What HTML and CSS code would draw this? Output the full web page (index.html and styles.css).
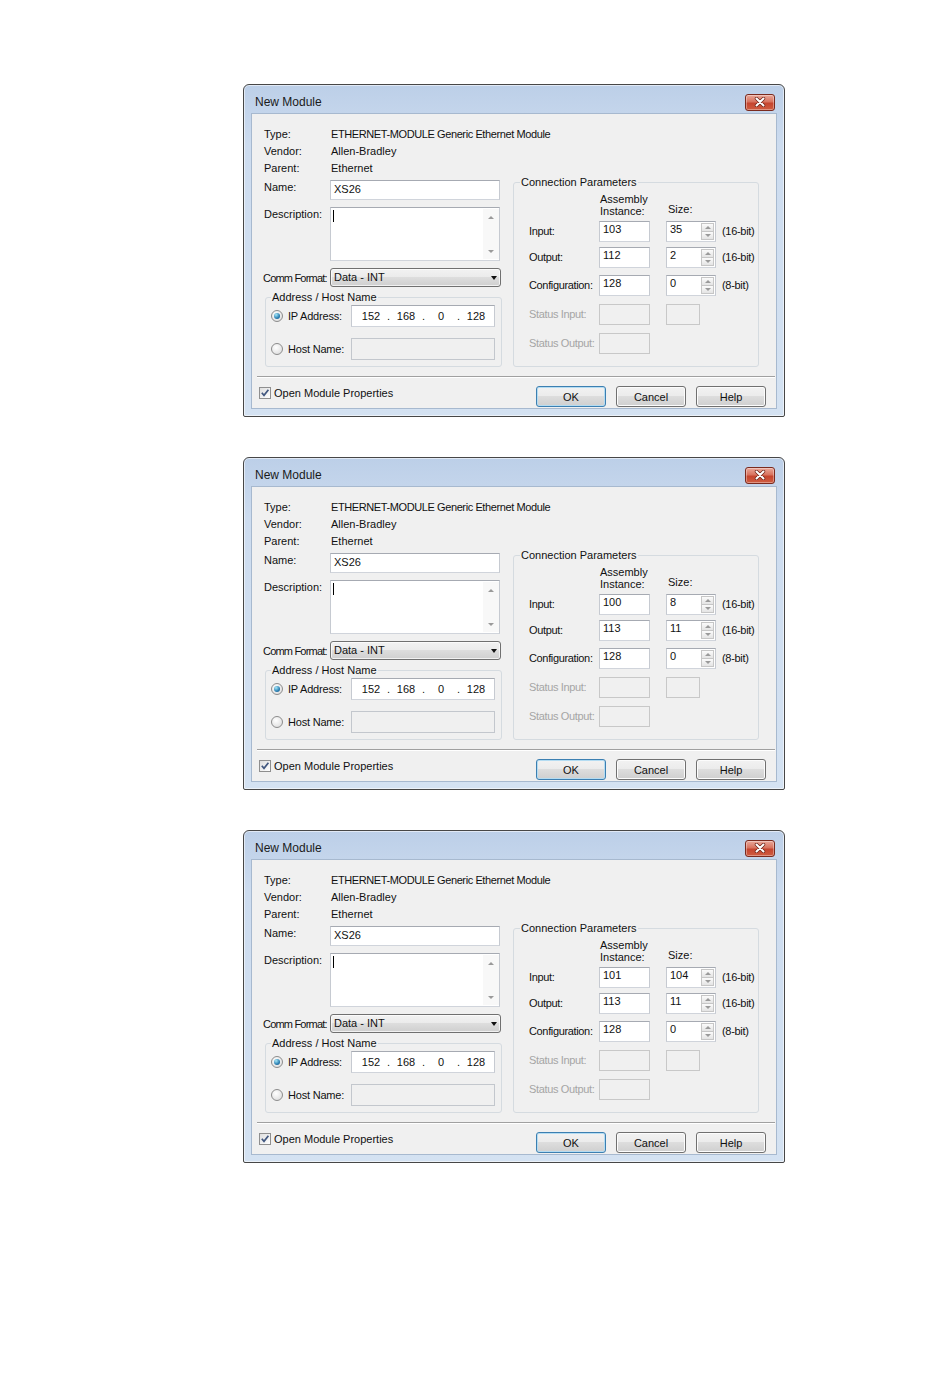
FILE: index.html
```html
<!DOCTYPE html>
<html lang="en">
<head>
    <meta charset="UTF-8">
    <meta name="viewport" content="width=device-width, initial-scale=1.0">
    <title>New Module</title>
    <link rel="stylesheet" href="styles.css">
</head>
<body>
    <div class="page" id="page"></div>

    <script>
// Connection parameters shown in each dialog
const modules = [
    { input: 103, inputSize: 35, output: 112, outputSize: 2, config: 128, configSize: 0 },
    { input: 100, inputSize: 8, output: 113, outputSize: 11, config: 128, configSize: 0 },
    { input: 101, inputSize: 104, output: 113, outputSize: 11, config: 128, configSize: 0 }
];

// Size box with the up/down spinner
function spinBox(value) {
    return `
        <div class="textbox spin">
            <span class="val">${value}</span>
            <span class="spin-btns"><span class="up"></span><span class="down"></span></span>
        </div>`;
}

function renderDialog(m) {
    return `
    <div class="dialog">
        <div class="title-bar">
            <span class="title">New Module</span>
            <span class="close-btn">
                <svg width="12" height="10" viewBox="0 0 12 10">
                    <path d="M2.5 1.5 L9.5 8.5 M9.5 1.5 L2.5 8.5" stroke="#6b2318" stroke-width="3.4" stroke-linecap="round"/>
                    <path d="M2.5 1.5 L9.5 8.5 M9.5 1.5 L2.5 8.5" stroke="#fff" stroke-width="2" stroke-linecap="round"/>
                </svg>
            </span>
        </div>
        <div class="client">
            <div class="info">
                <div>Type:</div><div class="type-value">ETHERNET-MODULE Generic Ethernet Module</div>
                <div>Vendor:</div><div>Allen-Bradley</div>
                <div>Parent:</div><div>Ethernet</div>
            </div>

            <div class="body">
                <div class="left-col">
                    <div class="form-row">
                        <label>Name:</label>
                        <div class="textbox name-box">XS26</div>
                    </div>
                    <div class="form-row">
                        <label>Description:</label>
                        <div class="textbox memo">
                            <span class="caret"></span>
                            <span class="vscroll"><span class="up"></span><span class="down"></span></span>
                        </div>
                    </div>
                    <div class="form-row combo-row">
                        <label>Comm Format:</label>
                        <div class="combo">Data - INT<span class="combo-arrow"></span></div>
                    </div>
                    <fieldset class="group address">
                        <legend>Address / Host Name</legend>
                        <div class="radio-row">
                            <span class="radio on"></span>
                            <span class="radio-label">IP Address:</span>
                            <div class="textbox ip-box">
                                <span>152</span><i>.</i><span>168</span><i>.</i><span>0</span><i>.</i><span>128</span>
                            </div>
                        </div>
                        <div class="radio-row">
                            <span class="radio"></span>
                            <span class="radio-label">Host Name:</span>
                            <div class="textbox ip-box disabled"></div>
                        </div>
                    </fieldset>
                </div>

                <fieldset class="group conn">
                    <legend>Connection Parameters</legend>
                    <div class="conn-grid">
                        <div></div>
                        <div class="col-head">Assembly<br>Instance:</div>
                        <div class="col-head size-head">Size:</div>
                        <div></div>

                        <div class="conn-label">Input:</div>
                        <div class="textbox num">${m.input}</div>
                        ${spinBox(m.inputSize)}
                        <div class="unit">(16-bit)</div>

                        <div class="conn-label">Output:</div>
                        <div class="textbox num">${m.output}</div>
                        ${spinBox(m.outputSize)}
                        <div class="unit">(16-bit)</div>

                        <div class="conn-label">Configuration:</div>
                        <div class="textbox num">${m.config}</div>
                        ${spinBox(m.configSize)}
                        <div class="unit">(8-bit)</div>

                        <div class="conn-label off">Status Input:</div>
                        <div class="off-box"></div>
                        <div class="off-box short"></div>
                        <div></div>

                        <div class="conn-label off">Status Output:</div>
                        <div class="off-box"></div>
                        <div></div>
                        <div></div>
                    </div>
                </fieldset>
            </div>

            <div class="separator"></div>

            <div class="footer">
                <div class="check-row">
                    <span class="checkbox">
                        <svg width="10" height="10" viewBox="0 0 10 10">
                            <path d="M1.8 4.8 L4 7.4 L8.4 1.8" fill="none" stroke="#41577f" stroke-width="1.7"/>
                        </svg>
                    </span>
                    Open Module Properties
                </div>
                <div class="buttons">
                    <button class="btn default">OK</button>
                    <button class="btn">Cancel</button>
                    <button class="btn">Help</button>
                </div>
            </div>
        </div>
    </div>`;
}

// Initial render
document.getElementById('page').innerHTML = modules.map(renderDialog).join('');
    </script>
</body>
</html>
```

FILE: styles.css
```css
body {
    margin: 0;
    background: #fff;
    font-family: "Liberation Sans", Arial, sans-serif;
    font-size: 11px;
    color: #111;
}

* {
    box-sizing: border-box;
}

.page {
    display: flex;
    flex-direction: column;
    gap: 40px;
    padding: 84px 0 0 243px;
}

/* Window frame */
.dialog {
    width: 542px;
    height: 333px;
    border: 1px solid #474747;
    border-radius: 6px 6px 2px 2px;
    background: linear-gradient(#bccfe8, #cddcef 60px, #d4e2f2);
    box-shadow: inset 0 0 0 1px rgba(255, 255, 255, 0.55);
    display: flex;
    flex-direction: column;
}

.title-bar {
    height: 28px;
    flex-shrink: 0;
    padding: 6px 9px 0 11px;
    display: flex;
    align-items: center;
    justify-content: space-between;
}

.title {
    font-size: 12px;
    line-height: 14px;
    color: #1a1a1a;
}

.close-btn {
    width: 30px;
    height: 17px;
    border: 1px solid #7a2a1e;
    border-radius: 3px;
    background: linear-gradient(#eaa89a, #d8735f 45%, #c5452f 55%, #d05d41);
    box-shadow: inset 0 0 0 1px rgba(255, 255, 255, 0.35);
    display: flex;
    align-items: center;
    justify-content: center;
}

.client {
    margin: 0 7px;
    height: 296px;
    flex-shrink: 0;
    overflow: hidden;
    background: #f0f0f0;
    border: 1px solid #a7b9cf;
}

/* Type / Vendor / Parent */
.info {
    display: grid;
    grid-template-columns: 67px auto;
    padding: 12px 0 0 12px;
    line-height: 17px;
}

.type-value {
    letter-spacing: -0.4px;
}

.body {
    display: flex;
    padding-left: 11px;
}

.left-col {
    width: 239px;
    padding-top: 3px;
}

.form-row {
    display: grid;
    grid-template-columns: 67px 170px;
    align-items: start;
    margin-bottom: 7px;
}

.form-row label {
    line-height: 14px;
    padding-left: 1px;
    white-space: nowrap;
}

.combo-row {
    grid-template-columns: 67px 171px;
    align-items: center;
    margin-bottom: 3px;
}

.combo-row label {
    padding-left: 0;
    letter-spacing: -0.8px;
}

/* Inputs */
.textbox {
    background: #fff;
    border: 1px solid;
    border-color: #a6aab2 #c6cad1 #d0d4db #c6cad1;
}

.name-box {
    height: 20px;
    line-height: 16px;
    padding: 0 3px;
}

.memo {
    height: 54px;
    display: flex;
    justify-content: space-between;
    padding: 1px 0 1px 2px;
}

.caret {
    width: 1px;
    height: 12px;
    margin-top: 1px;
    background: #000;
}

.vscroll {
    width: 16px;
    display: flex;
    flex-direction: column;
    justify-content: space-between;
    background: #f8f8f8;
}

.vscroll span {
    height: 16px;
    display: flex;
    align-items: center;
    justify-content: center;
}

.vscroll .up::after,
.spin-btns .up::after {
    content: "";
    border-left: 3px solid transparent;
    border-right: 3px solid transparent;
    border-bottom: 3px solid #9a9a9a;
}

.vscroll .down::after,
.spin-btns .down::after {
    content: "";
    border-left: 3px solid transparent;
    border-right: 3px solid transparent;
    border-top: 3px solid #9a9a9a;
}

.combo {
    height: 19px;
    border: 1px solid #707070;
    border-radius: 3px;
    background: linear-gradient(#f2f2f2, #ebebeb 50%, #dddddd 50%, #cfcfcf);
    box-shadow: inset 0 0 0 1px rgba(255, 255, 255, 0.7);
    padding: 0 3px;
    line-height: 17px;
    display: flex;
    justify-content: space-between;
    align-items: center;
}

.combo-arrow {
    border-left: 3.5px solid transparent;
    border-right: 3.5px solid transparent;
    border-top: 4px solid #111;
}

/* Group boxes */
.group {
    margin: 0;
    border: 1px solid #d5dbe0;
    border-radius: 3px;
    min-width: 0;
}

.group legend {
    padding: 0 1px;
    line-height: 14px;
}

.address {
    margin-left: 2px;
    width: 237px;
    padding: 1px 0 6px 5px;
}

.radio-row {
    display: flex;
    align-items: center;
    height: 22px;
}

.radio-row + .radio-row {
    margin-top: 11px;
}

.radio {
    width: 12px;
    height: 12px;
    margin-right: 5px;
    border-radius: 50%;
    border: 1px solid #8c8c8c;
    background: radial-gradient(circle at 40% 35%, #fff, #d8d8d8);
    position: relative;
}

.radio.on::after {
    content: "";
    position: absolute;
    left: 2px;
    top: 2px;
    width: 6px;
    height: 6px;
    border-radius: 50%;
    background: radial-gradient(circle at 35% 30%, #a6e8f8, #2b7fb2 60%, #17507b);
}

.radio-label {
    width: 63px;
    white-space: nowrap;
    letter-spacing: -0.2px;
}

.ip-box {
    width: 144px;
    height: 22px;
    display: flex;
    align-items: center;
    padding-left: 4px;
}

.ip-box span {
    width: 30px;
    text-align: center;
}

.ip-box i {
    width: 5px;
    font-style: normal;
    text-align: center;
}

.ip-box.disabled {
    background: #f0f0f0;
    border-color: #c3c7cd;
}

/* Connection parameters */
.conn {
    margin: -2px 0 0 11px;
    width: 246px;
    padding: 0 0 0 6px;
}

.conn-grid {
    display: grid;
    grid-template-columns: 70px 67px 56px auto;
    grid-template-rows: 32px 26px 28px 29px 29px 21px;
    margin-left: 9px;
}

.col-head {
    align-self: end;
    line-height: 12px;
    padding: 0 0 4px 1px;
}

.size-head {
    padding: 0 0 6px 2px;
}

.conn-label {
    height: 21px;
    line-height: 21px;
    white-space: nowrap;
    letter-spacing: -0.35px;
}

.conn-label.off {
    color: #a5a5a5;
}

.num {
    width: 51px;
    height: 21px;
    line-height: 14px;
    padding: 0 3px;
}

.spin {
    width: 50px;
    height: 21px;
    display: flex;
}

.spin .val {
    flex: 1;
    padding: 0 3px;
    line-height: 14px;
}

.spin-btns {
    width: 14px;
    display: flex;
    flex-direction: column;
    padding: 1px 1px 1px 0;
}

.spin-btns span {
    flex: 1;
    border: 1px solid #c6c6c6;
    background: linear-gradient(#fbfbfb, #e4e4e4);
    display: flex;
    align-items: center;
    justify-content: center;
}

.spin-btns span + span {
    border-top: none;
}

.unit {
    line-height: 21px;
    white-space: nowrap;
    letter-spacing: -0.3px;
}

.off-box {
    width: 51px;
    height: 21px;
    border: 1px solid #c8c8c8;
    background: #f0f0f0;
}

.off-box.short {
    width: 34px;
}

/* Bottom bar */
.separator {
    margin: 9px 1px 0 5px;
    border-top: 1px solid #a0a0a0;
    border-bottom: 1px solid #fff;
}

.footer {
    display: flex;
    align-items: flex-start;
    justify-content: space-between;
    padding: 8px 10px 0 7px;
}

.check-row {
    display: flex;
    align-items: center;
    gap: 3px;
    line-height: 14px;
}

.checkbox {
    width: 12px;
    height: 12px;
    border: 1px solid #8f8f8f;
    background: linear-gradient(135deg, #dedede, #fff);
    display: flex;
    align-items: center;
    justify-content: center;
}

.buttons {
    display: flex;
    gap: 10px;
}

.btn {
    width: 70px;
    height: 21px;
    padding: 0;
    font: inherit;
    color: #111;
    border: 1px solid #707070;
    border-radius: 3px;
    background: linear-gradient(#f2f2f2, #ebebeb 50%, #dddddd 50%, #cfcfcf);
    box-shadow: inset 0 0 0 1px #fcfcfc;
}

.btn.default {
    border-color: #3c7fb1;
    box-shadow: inset 0 0 0 1px #b4dcf2;
}
```
